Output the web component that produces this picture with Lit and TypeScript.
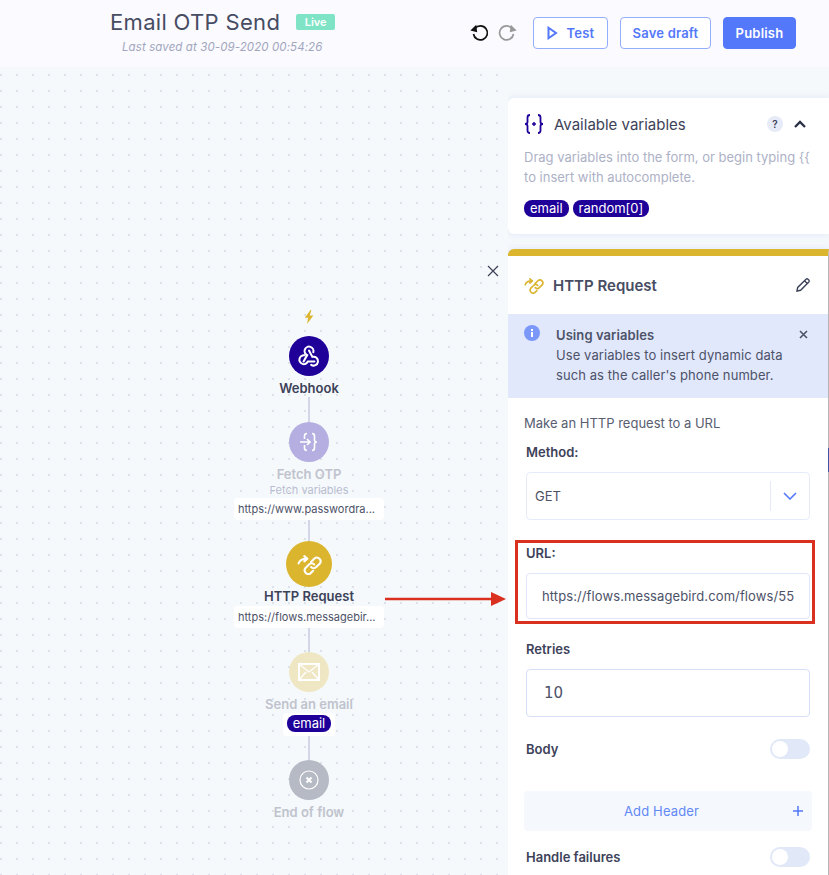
import { LitElement, css, html, svg } from 'lit';
import { customElement } from 'lit/decorators.js';

const webhookIcon = svg`<g fill="none" stroke="#fff" stroke-width="1.9" stroke-linecap="round">
  <path d="M7 17 10.3 11.200A4.100 4.100 0 1 1 16 8.500"/>
  <path d="M12 7 15.100 12.800A4.100 4.100 0 1 1 14 20.200"/>
  <path d="M17 17H11A4.100 4.100 0 1 1 7.800 11.300"/>
</g>`;

const linkIcon = (c: string) => svg`<g fill="none" stroke=${c} stroke-width="2" stroke-linecap="round" stroke-linejoin="round">
  <g transform="translate(1.500 -.5)">
    <path d="M12 8l3.500-3.500a3.600 3.600 0 0 1 5 5L17 13a3.600 3.600 0 0 1-5 0"/>
    <path d="M15 10.500a3.600 3.600 0 0 0-5 0L6.500 14a3.600 3.600 0 0 0 5 5l2.500-2.500"/>
  </g>
  <path d="M1.500 9C2.500 6 5 4.500 9.500 4.500"/>
  <path d="M7 2l3 2.500L7 7"/>
</g>`;

@customElement('flow-node')
export class FlowNode extends LitElement {
  static properties = {
    label: { type: String },
    sub: { type: String },
    url: { type: String },
    tone: { type: String },
    faded: { type: Boolean },
    size: { type: Number },
  };
  label = '';
  sub = '';
  url = '';
  tone = '#1f0099';
  faded = false;
  size = 40;

  static styles = css`
    :host {
      display: flex;
      flex-direction: column;
      align-items: center;
      width: 150px;
    }
    .circle {
      border-radius: 50%;
      display: flex;
      align-items: center;
      justify-content: center;
    }
    .label {
      font-size: 13px;
      line-height: 18px;
      font-weight: 600;
      color: #3d4259;
      white-space: nowrap;
      margin-top: 3px;
    }
    .big .label {
      margin-top: 0;
    }
    .faded .label {
      color: #c0c3cd;
    }
    .sub {
      font-size: 11px;
      line-height: 14px;
      color: #b9bdd0;
    }
    .url {
      box-sizing: border-box;
      width: 150px;
      height: 22px;
      line-height: 22px;
      margin-top: 1px;
      padding-left: 4px;
      background: #fff;
      border-radius: 4px;
      font-size: 11px;
      color: #4d5268;
      white-space: nowrap;
    }
    .wrap {
      display: flex;
      flex-direction: column;
      align-items: center;
    }
  `;

  render() {
    return html`
      <div class="wrap ${this.faded ? 'faded' : ''} ${this.size > 40 ? 'big' : ''}">
        <div
          class="circle"
          style="width:${this.size}px;height:${this.size}px;background:${this.tone}"
        >
          <slot></slot>
        </div>
        <div class="label">${this.label}</div>
        ${this.sub ? html`<div class="sub">${this.sub}</div>` : ''}
        ${this.url ? html`<div class="url">${this.url}</div>` : ''}
      </div>
    `;
  }
}

@customElement('app-root')
export class AppRoot extends LitElement {
  static styles = css`
    :host {
      display: block;
      position: relative;
      width: 829px;
      height: 875px;
      overflow: hidden;
      font-family: Inter, 'Noto Sans', sans-serif;
      color: #3d4259;
      background: #f5f9fc;
    }
    .header {
      height: 67px;
      box-sizing: border-box;
      background: #fafaff;
      display: flex;
      align-items: flex-start;
      padding: 8px 33px 0 110px;
    }
    .title-block {
      width: 360px;
    }
    .title-row {
      display: flex;
      align-items: center;
      gap: 16px;
    }
    h1 {
      margin: 0;
      font-size: 22px;
      line-height: 28px;
      font-weight: 400;
      letter-spacing: 0.32px;
      color: #474c63;
    }
    .live {
      background: #7fe3c5;
      color: #fff;
      font-size: 11px;
      font-weight: 600;
      line-height: 16px;
      padding: 0 8.500px;
      border-radius: 2px;
    }
    .saved {
      margin: 4px 0 0 12px;
      font-size: 11.500px;
      line-height: 14px;
      letter-spacing: 0.1px;
      font-style: italic;
      color: #a2a6bd;
    }
    .actions {
      display: flex;
      align-items: center;
      padding-top: 9px;
    }
    .history {
      display: flex;
      gap: 7px;
      margin-right: 16px;
    }
    .btn {
      box-sizing: border-box;
      height: 32px;
      border-radius: 4px;
      border: 1px solid #93aefb;
      background: #fff;
      color: #5478fa;
      font-size: 13px;
      font-weight: 600;
      letter-spacing: 0.2px;
      display: flex;
      align-items: center;
      justify-content: center;
      gap: 9px;
    }
    .btn.test {
      width: 75px;
      margin-right: 12px;
    }
    .btn.save {
      width: 91px;
      margin-right: 12px;
    }
    .btn.publish {
      width: 73px;
      background: #5478fa;
      border-color: #5478fa;
      color: #fff;
    }
    .main {
      display: flex;
      height: 808px;
    }
    .canvas {
      width: 508px;
      flex: none;
      position: relative;
      background-color: #f5f9fc;
      background-image: radial-gradient(circle at center, #dde2ea 1px, transparent 1.300px);
      background-size: 16px 16px;
      background-position: -7px 0;
    }
    .flow {
      display: flex;
      flex-direction: column;
      align-items: center;
      width: 150px;
      margin-left: 234px;
      padding-top: 243px;
    }
    .bolt {
      display: block;
      margin-bottom: 12px;
    }
    .line {
      width: 2px;
      background: #d3d6e8;
    }
    .email-wrap {
      background: #fff;
      padding: 2px 4px 4px;
      border-radius: 3px;
      display: flex;
    }
    .close {
      position: absolute;
      right: 9px;
      top: 198px;
    }
    .side {
      flex: 1;
      display: flex;
      flex-direction: column;
      padding-top: 31px;
      gap: 15px;
      min-width: 0;
    }
    .card {
      background: #fff;
      box-shadow: 0 0 6px rgba(200, 210, 245, 0.5);
    }
    .vars {
      flex: none;
      height: 136px;
      box-sizing: border-box;
      padding: 12px 23px 0 16px;
      border-radius: 6px 0 0 6px;
    }
    .vars-head {
      display: flex;
      align-items: center;
      height: 28px;
      font-size: 15px;
      color: #3d4259;
    }
    .vars-head .name {
      margin-left: 10px;
      flex: 1;
    }
    .help {
      width: 16px;
      height: 16px;
      border-radius: 50%;
      background: #e6ebf7;
      font-size: 10px;
      font-weight: 600;
      text-align: center;
      line-height: 16px;
      margin-right: 11px;
    }
    .vars p {
      margin: 9px 0 0;
      font-size: 13px;
      line-height: 20px;
      color: #adb1c6;
      white-space: nowrap;
    }
    .chips {
      display: flex;
      gap: 4px;
      margin-top: 13px;
    }
    .chip {
      background: #1f0099;
      color: #fff;
      border-radius: 8px;
      font-size: 13px;
      line-height: 17px;
      padding: 0 6px;
    }
    .panel {
      flex: none;
      height: 800px;
      box-sizing: border-box;
      border-radius: 6px 0 0 0;
      border-top: 7px solid #dcb52f;
      border-right: 1px solid #b5b5b5;
    }
    .panel-head {
      display: flex;
      align-items: center;
      height: 58px;
      padding: 0 17px 0 16px;
    }
    .panel-head h2 {
      margin: 0 0 0 9px;
      flex: 1;
      font-size: 15px;
      font-weight: 600;
      color: #474c63;
    }
    .notice {
      background: #e1e8fc;
      height: 84px;
      box-sizing: border-box;
      padding: 11px 20px 0 16px;
      display: flex;
      font-size: 13px;
      line-height: 20px;
      letter-spacing: 0.08px;
      color: #4d5268;
    }
    .notice .body {
      flex: 1;
      margin-left: 16px;
      white-space: nowrap;
    }
    .notice b {
      display: block;
      font-weight: 600;
    }
    .form {
      padding: 15px 18px 0;
      display: flex;
      flex-direction: column;
    }
    .intro {
      margin: 0 0 0 -2px;
      font-size: 13px;
      line-height: 20px;
      color: #585d72;
    }
    .lbl {
      font-size: 13px;
      line-height: 18px;
      font-weight: 600;
      color: #3d4259;
    }
    .field {
      box-sizing: border-box;
      height: 48px;
      border: 1px solid #e6eafa;
      border-radius: 4px;
      display: flex;
      align-items: center;
      font-size: 13px;
      color: #4d5268;
      white-space: nowrap;
      overflow: hidden;
    }
    .method {
      margin-top: 11px;
      padding-left: 8px;
    }
    .method span {
      flex: 1;
    }
    .method i {
      width: 1px;
      height: 30px;
      background: #e6eafa;
      margin-right: 12px;
    }
    .method svg {
      margin-right: 12px;
    }
    .url {
      height: 46px;
      margin-top: 11px;
      padding: 0 15px;
      border-color: #dfe6fa;
      letter-spacing: 0.1px;
    }
    .url span {
      display: block;
      width: 100%;
      overflow: hidden;
    }
    .retries {
      margin-top: 11px;
      padding-left: 17px;
      border-color: #d5dff5;
      font-family: 'DejaVu Sans', sans-serif;
      font-size: 15px;
    }
    .toggle-row {
      display: flex;
      align-items: center;
      justify-content: space-between;
      height: 20px;
    }
    .toggle {
      width: 40px;
      height: 20px;
      border-radius: 10px;
      background: #e1e8f7;
      position: relative;
    }
    .toggle::after {
      content: '';
      position: absolute;
      left: 2px;
      top: 2px;
      width: 16px;
      height: 16px;
      border-radius: 50%;
      background: #fff;
    }
    .add {
      margin: 32px -2px 0;
      height: 40px;
      background: #f5f8fc;
      border-radius: 4px;
      display: flex;
      align-items: center;
      font-size: 13px;
      letter-spacing: 0.15px;
      color: #6288f5;
      padding: 0 9px 0 6px;
    }
    .add span {
      flex: 1;
      text-align: center;
    }
    .annot-box {
      position: absolute;
      left: 515px;
      top: 540px;
      width: 300px;
      height: 84px;
      box-sizing: border-box;
      border: 3px solid #d9301f;
      pointer-events: none;
    }
    .annot-arrow {
      position: absolute;
      left: 385px;
      top: 591px;
    }
    .edge {
      position: absolute;
      right: 0;
      top: 448px;
      width: 1px;
      height: 24px;
      background: #3d53a8;
    }
  `;

  render() {
    return html`
      <div class="header">
        <div class="title-block">
          <div class="title-row">
            <h1>Email OTP Send</h1>
            <span class="live">Live</span>
          </div>
          <div class="saved">Last saved at 30-09-2020 00:54:26</div>
        </div>
        <div class="actions">
          <div class="history">
            <svg width="20" height="20" viewBox="0 0 20 20" fill="none" stroke="#111" stroke-width="1.700">
              <path d="M5 5.500A7 7 0 1 1 3.500 11"/><path d="M2 7l3.600-3.400.6 4.600z" fill="#111"/>
            </svg>
            <svg width="20" height="20" viewBox="0 0 20 20" fill="none" stroke="#999" stroke-width="1.700">
              <path d="M15 5.500A7 7 0 1 0 16.500 11"/><path d="M18 7l-3.600-3.400-.6 4.600z" fill="#999"/>
            </svg>
          </div>
          <div class="btn test">
            <svg width="11" height="14" viewBox="0 0 11 14" fill="none" stroke="#5478fa" stroke-width="2">
              <path d="M1.500 1.800v10.400L9 7z"/>
            </svg>
            Test
          </div>
          <div class="btn save">Save draft</div>
          <div class="btn publish">Publish</div>
        </div>
      </div>
      <div class="main">
        <div class="canvas">
          <svg class="close" width="12" height="12" viewBox="0 0 12 12" stroke="#3d4259" stroke-width="1.200">
            <path d="M1 1l10 10M11 1 1 11"/>
          </svg>
          <div class="flow">
            <svg class="bolt" width="10" height="14" viewBox="0 0 10 14">
              <path d="M6.500 0 .8 7.800h3.400L3 14 9.400 5.600H5.800L7.400 0z" fill="#dcb52f"/>
            </svg>
            <flow-node label="Webhook">
              <svg width="26" height="26" viewBox="0 0 24 24">${webhookIcon}</svg>
            </flow-node>
            <div class="line" style="height:25px"></div>
            <flow-node
              label="Fetch OTP"
              sub="Fetch variables"
              url="https://www.passwordra..."
              faded
              tone="#b4afe0"
            >
              <svg width="20" height="20" viewBox="0 0 20 20" fill="none" stroke="#fff" stroke-width="1.600">
                <path d="M8 1.500C6 1.500 5.500 2.500 5.500 4V7M8 18.500C6 18.500 5.500 17.500 5.500 16V13"/>
                <path d="M13 1.500C15 1.500 15.500 2.500 15.500 4V8C15.500 9 16.500 10 18 10 16.500 10 15.500 11 15.500 12V16C15.500 17.500 15 18.500 13 18.500"/>
                <path d="M1 10H11M8 7l3 3-3 3"/>
              </svg>
            </flow-node>
            <div class="line" style="height:21px"></div>
            <flow-node
              label="HTTP Request"
              url="https://flows.messagebir..."
              size="46"
              tone="#dcb52f"
            >
              <svg width="25" height="21" viewBox="0 0 24 20">${linkIcon('#fff')}</svg>
            </flow-node>
            <div class="line" style="height:24px"></div>
            <flow-node label="Send an email" faded tone="#efe7c4">
              <svg width="22" height="18" viewBox="0 0 22 18" fill="none" stroke="#fff" stroke-width="2">
                <rect x="1" y="1" width="20" height="16"/>
                <path d="M1 1l10 8 10-8M1 17l7-8M21 17l-7-8" stroke-width="1.300"/>
              </svg>
            </flow-node>
            <span class="email-wrap"><span class="chip">email</span></span>
            <div class="line" style="height:24px"></div>
            <flow-node label="End of flow" faded tone="#b6bac4">
              <svg width="20" height="20" viewBox="0 0 20 20" fill="none" stroke="#fff" stroke-width="1.200">
                <circle cx="10" cy="10" r="9"/><path d="M7.500 7.500l5 5M12.500 7.500l-5 5" stroke-width="2"/>
              </svg>
            </flow-node>
          </div>
        </div>
        <div class="side">
          <div class="card vars">
            <div class="vars-head">
              <svg width="20" height="20" viewBox="0 0 20 20" fill="none" stroke="#1f0099" stroke-width="1.800">
                <path d="M6 1C4 1 3.500 2 3.500 3.500V8C3.500 9 2.500 10 1 10 2.500 10 3.500 11 3.500 12V16.500C3.500 18 4 19 6 19"/>
                <path d="M14 1C16 1 16.500 2 16.500 3.500V8C16.500 9 17.500 10 19 10 17.500 10 16.500 11 16.500 12V16.500C16.500 18 16 19 14 19"/>
                <path d="M10 8v4M8 10h4" stroke-width="1.500"/>
              </svg>
              <span class="name">Available variables</span>
              <span class="help">?</span>
              <svg width="12" height="8" viewBox="0 0 12 8" fill="none" stroke="#2b2f44" stroke-width="2.300">
                <path d="M1 7 6 2l5 5"/>
              </svg>
            </div>
            <p>Drag variables into the form, or begin typing {{<br />to insert with autocomplete.</p>
            <div class="chips">
              <span class="chip">email</span><span class="chip">random[0]</span>
            </div>
          </div>
          <div class="card panel">
            <div class="panel-head">
              <svg width="20" height="17" viewBox="0 0 24 20">${linkIcon('#dcb52f')}</svg>
              <h2>HTTP Request</h2>
              <svg width="16" height="16" viewBox="0 0 16 16" fill="none" stroke="#3d4259" stroke-width="1.400">
                <path d="M2 14l.7-3.600L11 2.200a1.500 1.500 0 0 1 2 0l.8.8a1.500 1.500 0 0 1 0 2L5.600 13.300z"/>
                <path d="M9.500 3.700l2.800 2.800"/>
              </svg>
            </div>
            <div class="notice">
              <svg width="16" height="16" viewBox="0 0 16 16" style="flex:none">
                <circle cx="8" cy="8" r="8" fill="#7b97f8"/>
                <path d="M7 7h2v5H7zM7 4h2v2H7z" fill="#fff"/>
              </svg>
              <div class="body">
                <b>Using variables</b>
                Use variables to insert dynamic data<br />such as the caller's phone number.
              </div>
              <svg width="9" height="9" viewBox="0 0 9 9" stroke="#4d5268" stroke-width="1.600" style="margin-top:5px">
                <path d="M1 1l7 7M8 1 1 8"/>
              </svg>
            </div>
            <div class="form">
              <p class="intro">Make an HTTP request to a URL</p>
              <div class="lbl" style="margin-top:10px">Method:</div>
              <div class="field method">
                <span>GET</span><i></i>
                <svg width="14" height="8" viewBox="0 0 14 8" fill="none" stroke="#5478fa" stroke-width="1.600">
                  <path d="M1 1l6 6 6-6"/>
                </svg>
              </div>
              <div class="lbl" style="margin-top:24px">URL:</div>
              <div class="field url"><span>https://flows.messagebird.com/flows/55</span></div>
              <div class="lbl" style="margin-top:21px">Retries</div>
              <div class="field retries">10</div>
              <div class="toggle-row lbl" style="margin-top:22px">Body<span class="toggle"></span></div>
              <div class="add">
                <span>Add Header</span>
                <svg width="10" height="10" viewBox="0 0 10 10" stroke="#5478fa" stroke-width="1.500">
                  <path d="M5 0v10M0 5h10"/>
                </svg>
              </div>
              <div class="toggle-row lbl" style="margin-top:16px">Handle failures<span class="toggle"></span></div>
            </div>
          </div>
        </div>
      </div>
      <div class="annot-box"></div>
      <svg class="annot-arrow" width="122" height="16" viewBox="0 0 122 16">
        <path d="M0 8h108" stroke="#d9301f" stroke-width="2.500"/>
        <path d="M106 1l15 7-15 7z" fill="#d9301f"/>
      </svg>
      <div class="edge"></div>
    `;
  }
}
